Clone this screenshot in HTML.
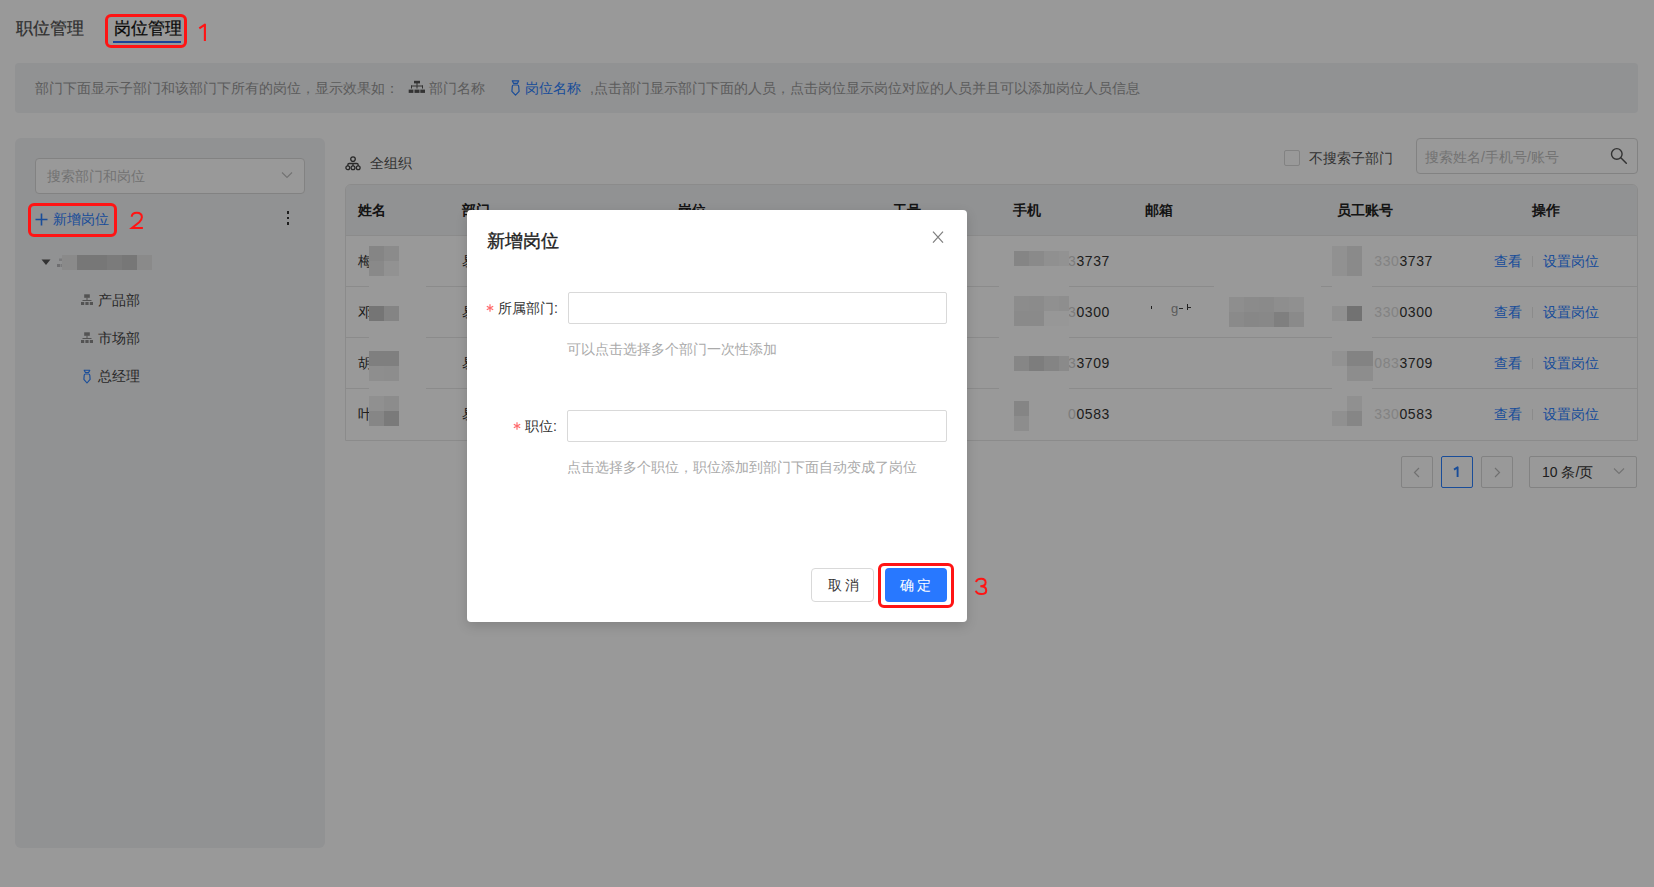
<!DOCTYPE html>
<html><head><meta charset="utf-8">
<style>
*{margin:0;padding:0;box-sizing:border-box}
html,body{width:1654px;height:887px;overflow:hidden;background:#fff;font-family:"Liberation Sans",sans-serif;font-size:14px;color:rgba(0,0,0,.65)}
.a{position:absolute;white-space:nowrap}
.t{line-height:1;}
#mask{position:absolute;left:0;top:0;width:1654px;height:887px;background:rgba(0,0,0,.4)}
.box{position:absolute;border:3px solid #ff1414;border-radius:6px}
.hd{color:#222;font-weight:bold}.cell{color:#333}.dg{letter-spacing:0.6px}.lnk{color:#2a80ff}
.num{position:absolute;color:#ff1a1a;font-size:23px;line-height:1}
</style></head><body>
<!-- tabs -->
<div class="a t" style="left:16px;top:20px;font-size:17px;color:#505050;-webkit-text-stroke:0.25px #505050">职位管理</div>
<div class="a t" style="left:114px;top:20px;font-size:17px;color:#111;-webkit-text-stroke:0.25px #111">岗位管理</div>
<div class="a" style="left:113px;top:41px;width:68px;height:2px;background:#2a70ff"></div>

<!-- info bar -->
<div class="a" style="left:15px;top:63px;width:1623px;height:50px;background:#f2f3f5;border-radius:4px"></div>
<div class="a t" style="left:35px;top:81px;color:#999">部门下面显示子部门和该部门下所有的岗位，显示效果如：</div>
<svg class="a" style="left:408px;top:80px" width="18" height="14" viewBox="0 0 18 14"><rect x="6" y="0.8" width="6" height="2.6" fill="#555"/><rect x="8.5" y="3" width="1" height="2.5" fill="#555"/><rect x="3" y="5.5" width="12" height="1" fill="#555"/><rect x="3" y="5.5" width="1" height="3" fill="#555"/><rect x="14" y="5.5" width="1" height="3" fill="#555"/><rect x="8.5" y="5.5" width="1" height="3" fill="#555"/><rect x="0.7" y="9.6" width="4.7" height="3.3" fill="#555"/><rect x="6.5" y="9.6" width="5" height="3.3" fill="#555"/><rect x="12.3" y="9.6" width="4.7" height="3.3" fill="#555"/></svg>
<svg class="a" style="left:510px;top:79px" width="11" height="18" viewBox="0 0 11 18"><path d="M2.3 1.8H8.7L7.5 4.3H3.5Z" fill="none" stroke="#2a80ff" stroke-width="1.2" stroke-linejoin="round"/><path d="M3.6 6H7.4Q8.6 6 8.7 7.4L9.1 12.3L5.5 16.2L1.9 12.3L2.3 7.4Q2.4 6 3.6 6Z" fill="none" stroke="#2a80ff" stroke-width="1.2" stroke-linejoin="round"/></svg>
<div class="a t" style="left:429px;top:81px;color:#999">部门名称</div>
<div class="a t" style="left:525px;top:81px;color:#2a80ff">岗位名称</div>
<div class="a t" style="left:590px;top:81px;color:#999">,点击部门显示部门下面的人员，点击岗位显示岗位对应的人员并且可以添加岗位人员信息</div>

<!-- left panel -->
<div class="a" style="left:15px;top:138px;width:310px;height:710px;background:#f2f3f5;border-radius:6px"></div>
<div class="a" style="left:35px;top:158px;width:270px;height:36px;background:#fff;border:1px solid #d9d9d9;border-radius:4px"></div>
<div class="a t" style="left:47px;top:169px;color:#bfbfbf">搜索部门和岗位</div>
<svg class="a" style="left:281px;top:171px" width="12" height="8" viewBox="0 0 12 8"><path d="M1 1.5 L6 6.5 L11 1.5" fill="none" stroke="#bfbfbf" stroke-width="1.1"/></svg>
<svg class="a" style="left:35px;top:213px" width="13" height="13" viewBox="0 0 13 13"><path d="M6.5 0.5V12.5M0.5 6.5H12.5" stroke="#2a80ff" stroke-width="1.6"/></svg>
<div class="a t" style="left:53px;top:212px;color:#2a80ff">新增岗位</div>
<div class="a" style="left:287px;top:211px;width:2px;height:3px;background:#333"></div>
<div class="a" style="left:287px;top:217px;width:2px;height:2px;background:#333"></div>
<div class="a" style="left:287px;top:222px;width:2px;height:3px;background:#333"></div>
<svg class="a" style="left:41px;top:259px" width="10" height="7" viewBox="0 0 10 7"><path d="M0.5 0.5H9.5L5 6Z" fill="#555"/></svg>

<svg class="a dept" style="left:81px;top:294px" width="12" height="11" viewBox="0 0 12 11"><rect x="3.2" y="0.3" width="5.6" height="3.5" fill="#8a8a8a"/><rect x="5.5" y="3.5" width="1" height="3" fill="#8a8a8a"/><rect x="1.5" y="6" width="9" height="1" fill="#8a8a8a"/><rect x="0" y="8" width="3.2" height="3" fill="#8a8a8a"/><rect x="4.4" y="8" width="3.2" height="3" fill="#8a8a8a"/><rect x="8.8" y="8" width="3.2" height="3" fill="#8a8a8a"/></svg>
<div class="a t" style="left:98px;top:293px;color:#444">产品部</div>
<svg class="a dept" style="left:81px;top:332px" width="12" height="11" viewBox="0 0 12 11"><rect x="3.2" y="0.3" width="5.6" height="3.5" fill="#8a8a8a"/><rect x="5.5" y="3.5" width="1" height="3" fill="#8a8a8a"/><rect x="1.5" y="6" width="9" height="1" fill="#8a8a8a"/><rect x="0" y="8" width="3.2" height="3" fill="#8a8a8a"/><rect x="4.4" y="8" width="3.2" height="3" fill="#8a8a8a"/><rect x="8.8" y="8" width="3.2" height="3" fill="#8a8a8a"/></svg>
<div class="a t" style="left:98px;top:331px;color:#444">市场部</div>
<svg class="a" style="left:83px;top:369px" width="8" height="15" viewBox="0 0 8 15"><path d="M1.2 1.2H6.8L5.6 3.5H2.4Z" fill="none" stroke="#2a80ff" stroke-width="1.15" stroke-linejoin="round"/><path d="M2.4 5H5.6Q6.7 5 6.8 6.3L7.1 10.3L4 14L0.9 10.3L1.2 6.3Q1.3 5 2.4 5Z" fill="none" stroke="#2a80ff" stroke-width="1.15" stroke-linejoin="round"/></svg>
<div class="a t" style="left:98px;top:369px;color:#444">总经理</div>

<!-- main -->
<div class="a" style="left:345px;top:184px;width:1293px;height:257px;border:1px solid #e8e8e8;border-radius:6px 6px 0 0;background:#fff;overflow:hidden">
  <div class="a" style="left:0;top:0;width:1293px;height:51px;background:#f2f3f5;border-bottom:1px solid #e8e8e8"></div>
  <div class="a" style="left:0;top:101px;width:1293px;height:1px;background:#e8e8e8"></div>
  <div class="a" style="left:0;top:152px;width:1293px;height:1px;background:#e8e8e8"></div>
  <div class="a" style="left:0;top:203px;width:1293px;height:1px;background:#e8e8e8"></div>
</div>
<div class="a t hd" style="left:358px;top:203px">姓名</div>
<div class="a t hd" style="left:462px;top:203px">部门</div>
<div class="a t hd" style="left:678px;top:203px">岗位</div>
<div class="a t hd" style="left:893px;top:203px">工号</div>
<div class="a t hd" style="left:1013px;top:203px">手机</div>
<div class="a t hd" style="left:1145px;top:203px">邮箱</div>
<div class="a t hd" style="left:1337px;top:203px">员工账号</div>
<div class="a t hd" style="left:1532px;top:203px">操作</div>
<div class="a t cell" style="left:358px;top:254px">梅</div>
<div class="a t cell" style="left:462px;top:254px">易</div>
<div class="a t cell dg" style="right:544px;top:254px"><span style="color:#d0d0d0">3</span>3737</div>
<div class="a t cell dg" style="right:221px;top:254px"><span style="color:#dadada">330</span>3737</div>
<div class="a t lnk" style="left:1494px;top:254px">查看</div>
<div class="a" style="left:1532px;top:256px;width:1px;height:11px;background:#e8e8e8"></div>
<div class="a t lnk" style="left:1543px;top:254px">设置岗位</div>
<div class="a t cell" style="left:358px;top:305px">邓</div>
<div class="a t cell" style="left:462px;top:305px">易</div>
<div class="a t cell dg" style="right:544px;top:305px"><span style="color:#d0d0d0">3</span>0300</div>
<div class="a t cell dg" style="right:221px;top:305px"><span style="color:#dadada">330</span>0300</div>
<div class="a t lnk" style="left:1494px;top:305px">查看</div>
<div class="a" style="left:1532px;top:307px;width:1px;height:11px;background:#e8e8e8"></div>
<div class="a t lnk" style="left:1543px;top:305px">设置岗位</div>
<div class="a t cell" style="left:358px;top:356px">胡</div>
<div class="a t cell" style="left:462px;top:356px">易</div>
<div class="a t cell dg" style="right:544px;top:356px"><span style="color:#d0d0d0">3</span>3709</div>
<div class="a t cell dg" style="right:221px;top:356px"><span style="color:#dadada">083</span>3709</div>
<div class="a t lnk" style="left:1494px;top:356px">查看</div>
<div class="a" style="left:1532px;top:358px;width:1px;height:11px;background:#e8e8e8"></div>
<div class="a t lnk" style="left:1543px;top:356px">设置岗位</div>
<div class="a t cell" style="left:358px;top:407px">叶</div>
<div class="a t cell" style="left:462px;top:407px">易</div>
<div class="a t cell dg" style="right:544px;top:407px"><span style="color:#d0d0d0">0</span>0583</div>
<div class="a t cell dg" style="right:221px;top:407px"><span style="color:#dadada">330</span>0583</div>
<div class="a t lnk" style="left:1494px;top:407px">查看</div>
<div class="a" style="left:1532px;top:409px;width:1px;height:11px;background:#e8e8e8"></div>
<div class="a t lnk" style="left:1543px;top:407px">设置岗位</div>

<div class="a" style="left:1401px;top:456px;width:32px;height:32px;border:1px solid #d9d9d9;border-radius:2px;background:#fff"></div>
<svg class="a" style="left:1413px;top:467px" width="8" height="11" viewBox="0 0 8 11"><path d="M6 1L1.5 5.5L6 10" fill="none" stroke="#bbb" stroke-width="1.2"/></svg>
<div class="a" style="left:1441px;top:456px;width:32px;height:32px;border:1px solid #2a80ff;border-radius:2px;background:#fff"></div>
<svg class="a" style="left:1450px;top:464px" width="14" height="16" viewBox="0 0 14 16"><path d="M4 5.6L7.6 3.3V13" fill="none" stroke="#2a80ff" stroke-width="1.9" stroke-linejoin="round"/></svg>
<div class="a" style="left:1481px;top:456px;width:32px;height:32px;border:1px solid #d9d9d9;border-radius:2px;background:#fff"></div>
<svg class="a" style="left:1493px;top:467px" width="8" height="11" viewBox="0 0 8 11"><path d="M2 1L6.5 5.5L2 10" fill="none" stroke="#bbb" stroke-width="1.2"/></svg>
<div class="a" style="left:1529px;top:456px;width:108px;height:32px;border:1px solid #d9d9d9;border-radius:2px;background:#fff"></div>
<div class="a t" style="left:1542px;top:465px;color:#333">10 条/页</div>
<svg class="a" style="left:1613px;top:467px" width="12" height="8" viewBox="0 0 12 8"><path d="M1 1.5 L6 6.5 L11 1.5" fill="none" stroke="#bfbfbf" stroke-width="1.1"/></svg>

<div class="a" style="left:1151px;top:306px;width:1px;height:3px;background:#333"></div>
<div class="a t" style="left:1171px;top:302px;color:#999;font-size:13px">g</div>
<div class="a" style="left:1179px;top:308px;width:4px;height:1px;background:#444"></div>
<div class="a" style="left:1187px;top:304px;width:1px;height:6px;background:#333"></div>
<div class="a" style="left:1187px;top:307px;width:4px;height:1px;background:#444"></div>

<svg class="a" style="left:345px;top:156px" width="16" height="15" viewBox="0 0 16 15"><circle cx="8" cy="3.1" r="2.3" fill="none" stroke="#444" stroke-width="1.3"/><path d="M2.8 10V8.9Q2.8 7.5 4.2 7.5H11.8Q13.2 7.5 13.2 8.9V10M8 7.5V10" fill="none" stroke="#444" stroke-width="1.3"/><circle cx="2.8" cy="11.8" r="1.9" fill="none" stroke="#444" stroke-width="1.3"/><circle cx="8" cy="11.8" r="1.9" fill="none" stroke="#444" stroke-width="1.3"/><circle cx="13.2" cy="11.8" r="1.9" fill="none" stroke="#444" stroke-width="1.3"/></svg>
<div class="a t" style="left:370px;top:156px;color:#555">全组织</div>
<div class="a" style="left:1284px;top:150px;width:16px;height:16px;border:1px solid #d9d9d9;border-radius:2px;background:#fff"></div>
<div class="a t" style="left:1309px;top:151px;color:#555">不搜索子部门</div>
<div class="a" style="left:1416px;top:138px;width:222px;height:36px;border:1px solid #d9d9d9;border-radius:4px;background:#fff"></div>
<div class="a t" style="left:1425px;top:150px;color:#bfbfbf">搜索姓名/手机号/账号</div>
<svg class="a" style="left:1609px;top:146px" width="20" height="20" viewBox="0 0 20 20"><circle cx="7.8" cy="7.9" r="5.3" fill="none" stroke="#555" stroke-width="1.4"/><path d="M11.8 11.8L17.3 17.3" stroke="#555" stroke-width="1.5" stroke-linecap="round"/></svg>

<div id="mask"></div>


<!-- mosaics -->
<div class="a" style="left:369px;top:285px;width:57px;height:3px;background:#999"></div>
<div class="a" style="left:999px;top:285px;width:70px;height:3px;background:#999"></div>
<div class="a" style="left:1332px;top:285px;width:40px;height:3px;background:#999"></div>
<div class="a" style="left:369px;top:336px;width:57px;height:3px;background:#999"></div>
<div class="a" style="left:999px;top:336px;width:70px;height:3px;background:#999"></div>
<div class="a" style="left:1332px;top:336px;width:40px;height:3px;background:#999"></div>
<div class="a" style="left:369px;top:387px;width:57px;height:3px;background:#999"></div>
<div class="a" style="left:999px;top:387px;width:70px;height:3px;background:#999"></div>
<div class="a" style="left:1332px;top:387px;width:40px;height:3px;background:#999"></div>
<div class="a" style="left:1214px;top:285px;width:107px;height:3px;background:#999"></div>

<svg class="a" style="left:57px;top:256px" width="6" height="13" viewBox="0 0 6 13"><rect x="2" y="2.5" width="4" height="2.5" fill="#7a7a7c"/><rect x="0" y="8" width="3" height="3" fill="#6e6e70"/><rect x="3.5" y="8" width="3" height="3" fill="#7a7a7c"/></svg>
<div class="a" style="left:62px;top:255px;width:15px;height:15px;background:#8a8a8a"></div>
<div class="a" style="left:77px;top:255px;width:30px;height:15px;background:#777777"></div>
<div class="a" style="left:107px;top:255px;width:15px;height:15px;background:#7b7b7b"></div>
<div class="a" style="left:122px;top:255px;width:15px;height:15px;background:#777777"></div>
<div class="a" style="left:137px;top:255px;width:15px;height:15px;background:#8a8a8a"></div>

<div class="a" style="left:369px;top:246px;width:15px;height:15px;background:#858585"></div>
<div class="a" style="left:384px;top:246px;width:15px;height:15px;background:#8b8b8b"></div>
<div class="a" style="left:369px;top:261px;width:15px;height:15px;background:#898989"></div>
<div class="a" style="left:384px;top:261px;width:15px;height:15px;background:#929292"></div>
<div class="a" style="left:369px;top:306px;width:15px;height:15px;background:#757575"></div>
<div class="a" style="left:384px;top:306px;width:15px;height:15px;background:#848484"></div>
<div class="a" style="left:369px;top:351px;width:15px;height:15px;background:#7f7f7f"></div>
<div class="a" style="left:384px;top:351px;width:15px;height:15px;background:#7f7f7f"></div>
<div class="a" style="left:369px;top:366px;width:15px;height:15px;background:#8e8e8e"></div>
<div class="a" style="left:384px;top:366px;width:15px;height:15px;background:#8d8d8d"></div>
<div class="a" style="left:369px;top:396px;width:15px;height:15px;background:#909090"></div>
<div class="a" style="left:384px;top:396px;width:15px;height:15px;background:#8c8c8c"></div>
<div class="a" style="left:369px;top:411px;width:15px;height:15px;background:#868686"></div>
<div class="a" style="left:384px;top:411px;width:15px;height:15px;background:#7a7a7a"></div>
<div class="a" style="left:1014px;top:251px;width:15px;height:15px;background:#858585"></div>
<div class="a" style="left:1029px;top:251px;width:15px;height:15px;background:#8a8a8a"></div>
<div class="a" style="left:1044px;top:251px;width:15px;height:15px;background:#909090"></div>
<div class="a" style="left:1059px;top:251px;width:10px;height:15px;background:#929292"></div>
<div class="a" style="left:1014px;top:296px;width:15px;height:15px;background:#8c8c8c"></div>
<div class="a" style="left:1029px;top:296px;width:15px;height:15px;background:#8b8b8b"></div>
<div class="a" style="left:1044px;top:296px;width:15px;height:15px;background:#909090"></div>
<div class="a" style="left:1059px;top:296px;width:10px;height:15px;background:#8e8e8e"></div>
<div class="a" style="left:1014px;top:311px;width:15px;height:15px;background:#8a8a8a"></div>
<div class="a" style="left:1029px;top:311px;width:15px;height:15px;background:#8a8a8a"></div>
<div class="a" style="left:1044px;top:311px;width:15px;height:15px;background:#979797"></div>
<div class="a" style="left:1059px;top:311px;width:10px;height:15px;background:#979797"></div>
<div class="a" style="left:1014px;top:356px;width:15px;height:15px;background:#868686"></div>
<div class="a" style="left:1029px;top:356px;width:15px;height:15px;background:#7d7d7d"></div>
<div class="a" style="left:1044px;top:356px;width:15px;height:15px;background:#848484"></div>
<div class="a" style="left:1059px;top:356px;width:10px;height:15px;background:#8a8a8a"></div>
<div class="a" style="left:1014px;top:401px;width:15px;height:15px;background:#858585"></div>
<div class="a" style="left:1014px;top:416px;width:15px;height:15px;background:#8d8d8d"></div>
<div class="a" style="left:1229px;top:297px;width:15px;height:15px;background:#8e8e8e"></div>
<div class="a" style="left:1244px;top:297px;width:15px;height:15px;background:#8b8b8b"></div>
<div class="a" style="left:1259px;top:297px;width:15px;height:15px;background:#8a8a8a"></div>
<div class="a" style="left:1274px;top:297px;width:15px;height:15px;background:#8e8e8e"></div>
<div class="a" style="left:1289px;top:297px;width:15px;height:15px;background:#909090"></div>
<div class="a" style="left:1229px;top:312px;width:15px;height:15px;background:#8a8a8a"></div>
<div class="a" style="left:1244px;top:312px;width:15px;height:15px;background:#878787"></div>
<div class="a" style="left:1259px;top:312px;width:15px;height:15px;background:#888888"></div>
<div class="a" style="left:1274px;top:312px;width:15px;height:15px;background:#7f7f7f"></div>
<div class="a" style="left:1289px;top:312px;width:15px;height:15px;background:#8a8a8a"></div>
<div class="a" style="left:1347px;top:246px;width:15px;height:30px;background:#8a8a8a"></div>
<div class="a" style="left:1332px;top:246px;width:15px;height:30px;background:#919191"></div>
<div class="a" style="left:1332px;top:306px;width:15px;height:15px;background:#909090"></div>
<div class="a" style="left:1347px;top:306px;width:15px;height:15px;background:#727272"></div>
<div class="a" style="left:1332px;top:351px;width:15px;height:15px;background:#929292"></div>
<div class="a" style="left:1347px;top:351px;width:15px;height:15px;background:#838383"></div>
<div class="a" style="left:1362px;top:351px;width:11px;height:15px;background:#838383"></div>
<div class="a" style="left:1347px;top:366px;width:15px;height:15px;background:#8d8d8d"></div>
<div class="a" style="left:1362px;top:366px;width:11px;height:15px;background:#8d8d8d"></div>
<div class="a" style="left:1347px;top:396px;width:15px;height:15px;background:#909090"></div>
<div class="a" style="left:1332px;top:411px;width:15px;height:15px;background:#909090"></div>
<div class="a" style="left:1347px;top:411px;width:15px;height:15px;background:#868686"></div>
<!-- modal -->
<div class="a" style="left:467px;top:210px;width:500px;height:412px;background:#fff;border-radius:4px;box-shadow:0 4px 12px rgba(0,0,0,.15)"></div>
<div class="a t" style="left:487px;top:232px;font-size:18px;color:#222;-webkit-text-stroke:0.35px #222">新增岗位</div>


<svg class="a" style="left:932px;top:231px" width="12" height="12" viewBox="0 0 12 12"><path d="M1 0.6L11 11.6M11 0.6L1 11.6" stroke="#808080" stroke-width="1.25"/></svg>
<svg class="a" style="left:486px;top:304px" width="8" height="8" viewBox="0 0 8 8"><path d="M4 0.3V7.7M0.8 2.15L7.2 5.85M0.8 5.85L7.2 2.15" stroke="#ff6b6d" stroke-width="1.2"/></svg>
<div class="a t" style="left:498px;top:301px;color:#333">所属部门:</div>
<div class="a" style="left:568px;top:292px;width:379px;height:32px;border:1px solid #d9d9d9;border-radius:2px"></div>
<div class="a t" style="left:567px;top:342px;color:#aaa">可以点击选择多个部门一次性添加</div>
<svg class="a" style="left:513px;top:422px" width="8" height="8" viewBox="0 0 8 8"><path d="M4 0.3V7.7M0.8 2.15L7.2 5.85M0.8 5.85L7.2 2.15" stroke="#ff6b6d" stroke-width="1.2"/></svg>
<div class="a t" style="left:525px;top:419px;color:#333">职位:</div>
<div class="a" style="left:567px;top:410px;width:380px;height:32px;border:1px solid #d9d9d9;border-radius:2px"></div>
<div class="a t" style="left:567px;top:460px;color:#aaa">点击选择多个职位，职位添加到部门下面自动变成了岗位</div>
<div class="a" style="left:811px;top:568px;width:63px;height:34px;border:1px solid #d9d9d9;border-radius:4px;background:#fff"></div>
<div class="a t" style="left:828px;top:578px;color:#333;letter-spacing:3px">取消</div>
<div class="a" style="left:885px;top:568px;width:62px;height:34px;border-radius:4px;background:#2878ff"></div>
<div class="a t" style="left:900px;top:578px;color:#fff;letter-spacing:3px">确定</div>

<!-- annotations -->
<div class="box" style="left:105px;top:14px;width:82px;height:34px"></div>
<svg class="a" style="left:190px;top:16px" width="24" height="30" viewBox="190 16 24 30"><path d="M199.3 28.3 L204.9 24.6 V41" fill="none" stroke="#ff1414" stroke-width="2.1" stroke-linejoin="round"/></svg>
<div class="box" style="left:28px;top:203px;width:89px;height:34px"></div>
<svg class="a" style="left:128px;top:208px" width="18" height="24" viewBox="0 0 18 24"><path d="M3.7 8.8 C3.9 6 6 4.8 8.8 4.8 C11.8 4.8 13.9 6.6 13.9 9.3 C13.9 11.2 12.8 12.6 11.2 14.2 L3.9 20 H14.9" fill="none" stroke="#ff1414" stroke-width="2"/></svg>
<div class="box" style="left:878px;top:563px;width:76px;height:45px"></div>
<svg class="a" style="left:971px;top:574px" width="20" height="24" viewBox="0 0 20 24"><path d="M5 8 C5.6 5.8 7.6 4.8 10.2 4.8 C12.8 4.8 14.6 6.3 14.6 8.5 C14.6 10.8 12.6 12.3 9.3 12.3 C13 12.3 15.2 14 15.2 16.4 C15.2 18.8 13 20 10.2 20 C7.5 20 5.5 19 4.8 16.8" fill="none" stroke="#ff1414" stroke-width="2"/></svg>
</body></html>
